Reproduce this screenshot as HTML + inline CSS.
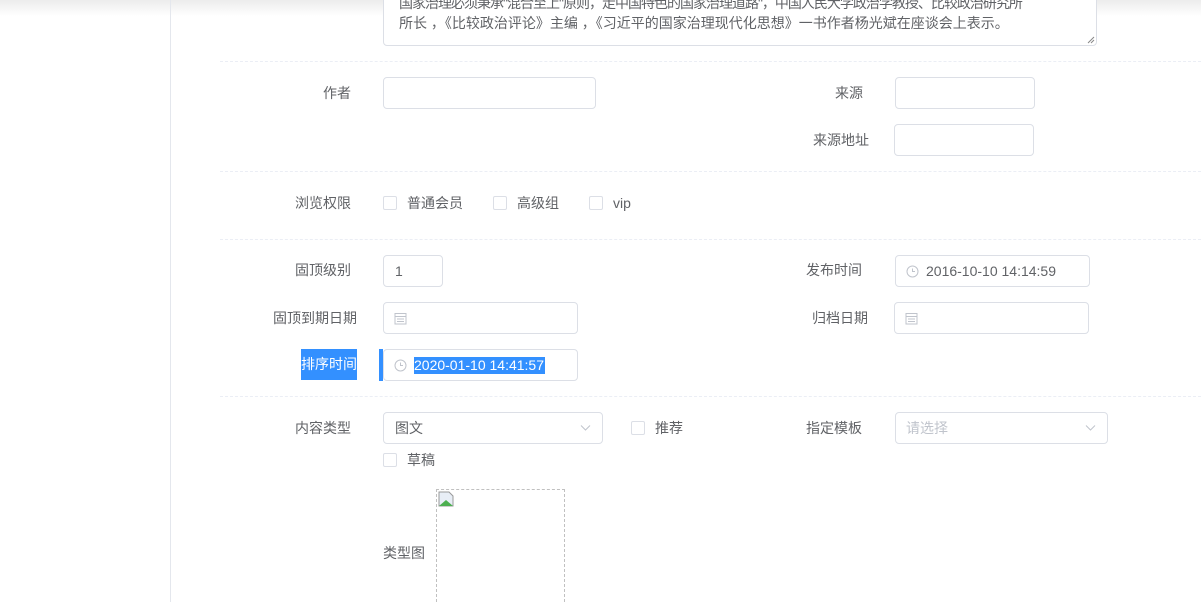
<!DOCTYPE html>
<html><head><meta charset="utf-8"><style>
*{box-sizing:border-box;margin:0;padding:0}
html{width:1201px;height:602px;overflow:hidden}
body{width:1201px;height:602px;overflow:hidden;background:#fff;position:relative;font-family:"Liberation Sans","Noto Sans CJK SC",sans-serif;font-size:14px;color:#606266}
.a{position:absolute}
.lb{position:absolute;text-align:right;white-space:nowrap;line-height:20px}
.in{position:absolute;border:1px solid #dcdfe6;border-radius:4px;background:#fff}
.dl{position:absolute;left:220px;right:0;border-top:1px dashed #ebeef5}
.cb{position:absolute;width:14px;height:14px;border:1px solid #dcdfe6;border-radius:2px;background:#fff}
.t{position:absolute;white-space:nowrap;line-height:20px}
</style></head><body>
<div class="a" style="left:0;top:0;width:1201px;height:16px;background:linear-gradient(#ececec,rgba(255,255,255,0))"></div>
<div class="a" style="left:170px;top:0;width:1px;height:602px;background:#e4e7ed"></div>
<div class="in" style="left:383px;top:-20px;width:714px;height:66px;overflow:hidden">
<div class="t" style="left:15px;top:12px;letter-spacing:-1px">国家治理必须秉承"混合至上"原则，走中国特色的国家治理道路"，中国人民大学政治学教授、比较政治研究所</div>
<div class="t" style="left:15px;top:32px">所长 ，《比较政治评论》主编 ，《习近平的国家治理现代化思想》一书作者杨光斌在座谈会上表示。</div>
<svg class="a" style="right:1px;bottom:1px" width="8" height="8"><path d="M1 7L7 1M4 7L7 4" stroke="#888" stroke-width="1"/></svg>
</div>
<div class="dl" style="top:61px"></div>
<div class="dl" style="top:171px"></div>
<div class="dl" style="top:239px"></div>
<div class="dl" style="top:396px"></div>

<div class="lb" style="right:850px;top:83px">作者</div>
<div class="in" style="left:383px;top:77px;width:213px;height:32px"></div>
<div class="lb" style="right:338px;top:83px">来源</div>
<div class="in" style="left:895px;top:77px;width:140px;height:32px"></div>
<div class="lb" style="right:332px;top:130px">来源地址</div>
<div class="in" style="left:894px;top:124px;width:140px;height:32px"></div>

<div class="lb" style="right:850px;top:193px">浏览权限</div>
<div class="cb" style="left:383px;top:196px"></div><div class="t" style="left:407px;top:193px">普通会员</div>
<div class="cb" style="left:493px;top:196px"></div><div class="t" style="left:517px;top:193px">高级组</div>
<div class="cb" style="left:589px;top:196px"></div><div class="t" style="left:613px;top:193px">vip</div>

<div class="lb" style="right:850px;top:260px">固顶级别</div>
<div class="in" style="left:383px;top:255px;width:60px;height:32px"><div class="t" style="left:11px;top:5px">1</div></div>
<div class="lb" style="right:339px;top:260px">发布时间</div>
<div class="in" style="left:895px;top:255px;width:195px;height:32px">
<svg class="a" style="left:10px;top:9px" width="13" height="13"><circle cx="6.5" cy="6.5" r="5.5" fill="none" stroke="#c0c4cc"/><path d="M6.5 3.5V6.5H9" fill="none" stroke="#c0c4cc"/></svg>
<div class="t" style="left:30px;top:5px">2016-10-10 14:14:59</div></div>

<div class="lb" style="right:844px;top:308px">固顶到期日期</div>
<div class="in" style="left:383px;top:302px;width:195px;height:32px">
<svg class="a" style="left:10px;top:9px" width="13" height="13"><rect x="1" y="1.5" width="11" height="10.5" fill="none" stroke="#c0c4cc"/><path d="M1 4.5H12M3 7H10M3 9.5H10" stroke="#c0c4cc"/></svg></div>
<div class="lb" style="right:333px;top:308px">归档日期</div>
<div class="in" style="left:894px;top:302px;width:195px;height:32px">
<svg class="a" style="left:10px;top:9px" width="13" height="13"><rect x="1" y="1.5" width="11" height="10.5" fill="none" stroke="#c0c4cc"/><path d="M1 4.5H12M3 7H10M3 9.5H10" stroke="#c0c4cc"/></svg></div>

<div class="a" style="left:301px;top:349px;width:56px;height:31px;background:#3390ff;color:#fff;line-height:31px">排序时间</div>
<div class="a" style="left:379px;top:349px;width:4px;height:32px;background:#3390ff"></div>
<div class="in" style="left:383px;top:349px;width:195px;height:32px">
<svg class="a" style="left:10px;top:9px" width="13" height="13"><circle cx="6.5" cy="6.5" r="5.5" fill="none" stroke="#c0c4cc"/><path d="M6.5 3.5V6.5H9" fill="none" stroke="#c0c4cc"/></svg>
<div class="a" style="left:30px;top:7px;height:17px;background:#3390ff;color:#fff;line-height:17px;padding:0 1px 0 0">2020-01-10 14:41:57</div></div>

<div class="lb" style="right:850px;top:418px">内容类型</div>
<div class="in" style="left:383px;top:412px;width:220px;height:32px"><div class="t" style="left:11px;top:5px">图文</div>
<svg class="a" style="left:196px;top:11px" width="11" height="8"><path d="M1 1.5L5.5 6L10 1.5" fill="none" stroke="#c0c4cc"/></svg></div>
<div class="cb" style="left:631px;top:421px"></div><div class="t" style="left:655px;top:418px">推荐</div>
<div class="lb" style="right:339px;top:418px">指定模板</div>
<div class="in" style="left:895px;top:412px;width:213px;height:32px"><div class="t" style="left:10px;top:5px;color:#c0c4cc">请选择</div>
<svg class="a" style="left:189px;top:11px" width="11" height="8"><path d="M1 1.5L5.5 6L10 1.5" fill="none" stroke="#c0c4cc"/></svg></div>
<div class="cb" style="left:383px;top:453px"></div><div class="t" style="left:407px;top:450px">草稿</div>

<div class="t" style="left:383px;top:543px">类型图</div>
<div class="a" style="left:436px;top:489px;width:129px;height:113px;border:1px dashed #c0c0c0;border-bottom:none">
<svg class="a" style="left:1px;top:1px" width="16" height="16"><path d="M1 1H11L15 5V15H1Z" fill="#e8eef6" stroke="#999"/><path d="M1 15L8 9L15 15Z" fill="#4caf50"/></svg></div>
</body></html>
